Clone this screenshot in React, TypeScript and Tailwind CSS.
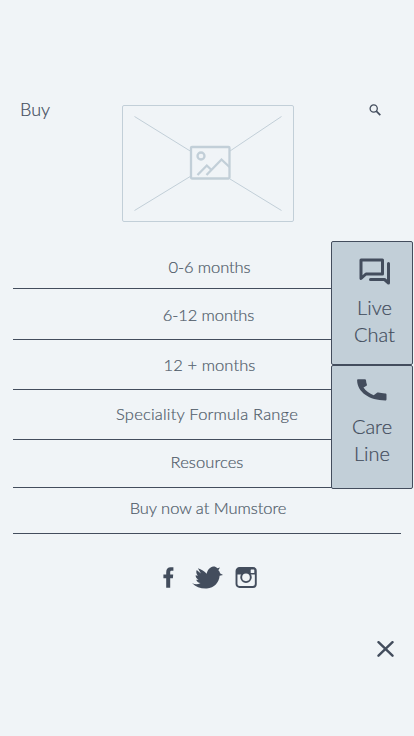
import React from 'react';

const menuItems = [
    { label: '0-6 months', row: 'h-[43px] pt-[11px] pl-[5px]', text: 'tracking-[-0.1px]' },
    { label: '6-12 months', row: 'h-[51px] pt-[16px] pl-[3px]', text: 'tracking-[-0.1px]' },
    { label: '12 + months', row: 'h-[50px] pt-[15px] pl-[5px]', text: 'tracking-[0.1px]' },
    { label: 'Speciality Formula Range', row: 'h-[50px] pt-[14px]', text: 'tracking-[0.2px]' },
    { label: 'Resources', row: 'h-[48px] pt-[12px]', text: 'tracking-[0.1px]' },
    { label: 'Buy now at Mumstore', row: 'h-[46px] pt-[10px] pl-[2px]', text: 'tracking-[-0.05px]' },
];

const ImagePlaceholder: React.FC = () => (
    <svg width="172" height="117" viewBox="0 0 172 117" fill="none" stroke="#c2cfd8">
        <rect x="0.5" y="0.5" width="171" height="116" rx="1.5" />
        <path d="M12.5 11.5 69 46.5M108 46 159.5 11.5M12.5 105.5 69 71M108 74 159.5 105.5" />
        <g strokeWidth="2.3">
            <rect x="69" y="42" width="38.5" height="31.5" rx="1" />
            <circle cx="79" cy="51" r="3.5" />
            <path d="M75.5 70 84.8 60.5 89 64.5M84.5 70 99.5 54.5 107.5 62" />
        </g>
    </svg>
);

const SearchIcon: React.FC = () => (
    <svg width="12" height="12" viewBox="0 0 12 12" fill="none" stroke="#434d5d">
        <circle cx="4.7" cy="4.5" r="3.6" strokeWidth="1.3" />
        <path d="m7.3 7.2 4 4" strokeWidth="1.7" />
    </svg>
);

const ChatIcon: React.FC = () => (
    <svg width="32" height="28" viewBox="0 0 32 28" fill="none" stroke="#434d5d" strokeWidth="3" strokeLinejoin="round" strokeLinecap="round">
        <path d="M2 2h21.5v14H7l-5 4.500Z" />
        <path d="M29.5 5.5V25l-4-3.500H11.500" />
    </svg>
);

const PhoneIcon: React.FC = () => (
    <svg width="30" height="22" viewBox="0 0 30 22" fill="#434d5d">
        <path d="M1.2.2h6.5c.8 0 1.200.4 1.300 1.100.1 1.500.4 2.900.9 4.100.2.500.1 1-.4 1.300L6.500 8.500c2.300 3.500 6 6.100 10.200 7.700l3.300-2.400c.4-.3.900-.4 1.400-.2 1.900.5 4 .8 6.900.9.800 0 1.200.4 1.200 1.100v4.700c0 .8-.5 1.200-1.200 1.200C12.500 21.500.3 13.200.1 1.300.100.6.500.2 1.200.2Z" />
    </svg>
);

const FacebookIcon: React.FC = () => (
    <svg width="11" height="21" viewBox="0 0 11 21" fill="#434d5d">
        <path d="M3.200 20.800V11.200H.4V7.600h2.800V5.200C3.200 1.800 4.900.2 7.600.2h2.800v3.500H8.700c-1.200 0-1.500.5-1.500 1.500v2.400h3l-.3 3.600H7.200v9.600Z" />
    </svg>
);

const TwitterIcon: React.FC = () => (
    <svg width="31" height="23" viewBox="0 0 31 23" fill="#434d5d">
        <path d="M0 16.900c2.800 1.800 5.700 1.800 8.500.2-2.200-.2-3.700-1.500-4.300-3.400h2.300C4.400 12.600 3.600 11 3.600 9.300l2.200.4C4.300 8 3.900 6 4.700 4l4.200 3.500L5.900 2.300c3.300.8 6.800 3.300 8.700 5.500C15.500 4 18.200.7 21.300.5c1.500-.1 3 .5 4 1.700L28 1.500l-1.700 2.700c.9.500 1.500 1.500 1.700 3l3 1.700-3.400.8c-.5 6.600-5.300 12.300-12.700 12.700C8.900 22.700 3.800 20.900 0 16.900Z" />
    </svg>
);

const InstagramIcon: React.FC = () => (
    <svg width="22" height="21" viewBox="0 0 22 21" fill="none" stroke="#434d5d">
        <rect x="1.500" y="1" width="19.300" height="19" rx="3" strokeWidth="1.900" />
        <path d="M1 7.500V3.500L3.500 1H20v6.500H1Z" fill="#434d5d" stroke="none" />
        <circle cx="11" cy="10.300" r="4.800" strokeWidth="1.900" fill="#f0f4f7" />
        <rect x="15.700" y="2.500" width="3.600" height="3.600" rx=".4" fill="#f0f4f7" stroke="none" />
    </svg>
);

const App: React.FC = () => {
    return (
        <div className="relative h-[736px] w-[414px] overflow-hidden bg-[#f0f4f7] font-['Lato',sans-serif] font-light text-[#434d5d] [-webkit-text-stroke:0.2px]">
            {/* Header */}
            <header className="flex items-start justify-between pt-[105px] pl-[20px] pr-[33px]">
                <a className="w-[102px] text-[18px] leading-[8px]">Buy</a>
                <ImagePlaceholder />
                <button className="ml-auto -mt-px"><SearchIcon /></button>
            </header>

            {/* Menu */}
            <nav className="mx-[13px] mt-[24px] text-center text-[16.5px] leading-[20px] text-[#4f5b69]">
                {menuItems.map((item) => (
                    <div key={item.label} className={`border-b border-[#434d5d] ${item.row}`}>
                        <a className={item.text}>{item.label}</a>
                    </div>
                ))}
            </nav>

            {/* Social links */}
            <div className="mt-[32px] ml-[163px] flex items-start">
                <a className="mt-[1px] w-[29px]"><FacebookIcon /></a>
                <a className="w-[43px]"><TwitterIcon /></a>
                <a className="mt-[1px]"><InstagramIcon /></a>
            </div>

            <button className="mt-[52px] ml-[377px] block">
                <svg width="17" height="16" viewBox="0 0 17 16" stroke="#434d5d" strokeWidth="2.400" strokeLinecap="round">
                    <path d="m1.500 1.200 14 13.500M15.500 1.200l-14 13.500" />
                </svg>
            </button>

            {/* Contact tabs, pinned over the menu */}
            <aside className="absolute top-[241px] right-px w-[82px] text-[20px] leading-[27px]">
                <div className="flex h-[124px] flex-col items-center rounded-[2px] border border-[#434d5d] bg-[#c2cfd8] pt-[16px] pl-[5px]">
                    <ChatIcon />
                    <p className="mt-[8px] text-center">Live<br />Chat</p>
                </div>
                <div className="flex h-[124px] flex-col items-center rounded-[2px] border border-[#434d5d] bg-[#c2cfd8] pt-[13px]">
                    <PhoneIcon />
                    <p className="mt-[12px] text-center">Care<br />Line</p>
                </div>
            </aside>
        </div>
    );
};

export default App;
